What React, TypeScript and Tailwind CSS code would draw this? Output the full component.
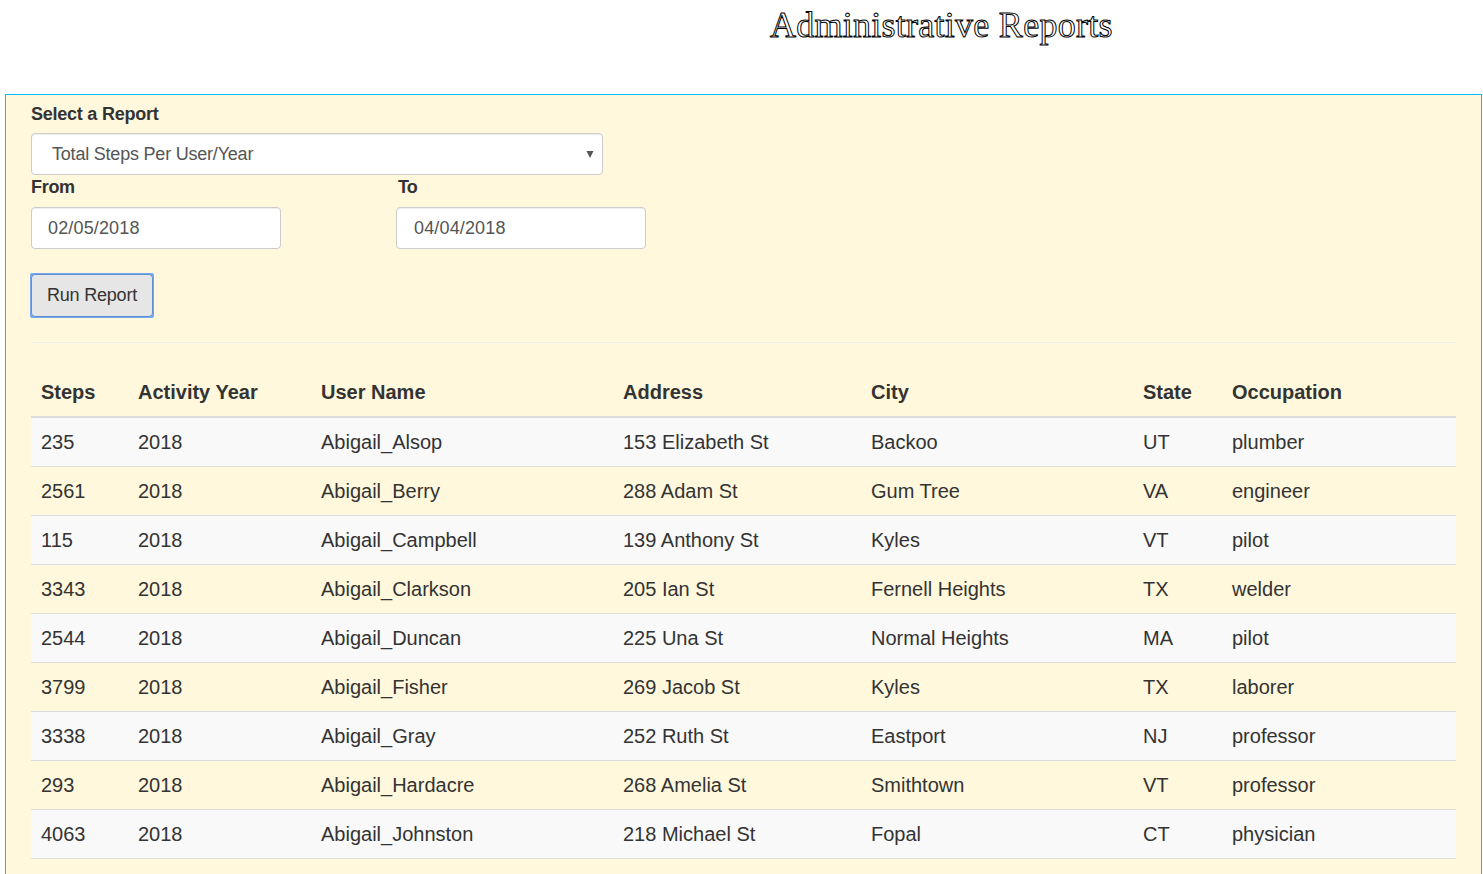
const rows = [
  ['235', '2018', 'Abigail_Alsop', '153 Elizabeth St', 'Backoo', 'UT', 'plumber'],
  ['2561', '2018', 'Abigail_Berry', '288 Adam St', 'Gum Tree', 'VA', 'engineer'],
  ['115', '2018', 'Abigail_Campbell', '139 Anthony St', 'Kyles', 'VT', 'pilot'],
  ['3343', '2018', 'Abigail_Clarkson', '205 Ian St', 'Fernell Heights', 'TX', 'welder'],
  ['2544', '2018', 'Abigail_Duncan', '225 Una St', 'Normal Heights', 'MA', 'pilot'],
  ['3799', '2018', 'Abigail_Fisher', '269 Jacob St', 'Kyles', 'TX', 'laborer'],
  ['3338', '2018', 'Abigail_Gray', '252 Ruth St', 'Eastport', 'NJ', 'professor'],
  ['293', '2018', 'Abigail_Hardacre', '268 Amelia St', 'Smithtown', 'VT', 'professor'],
  ['4063', '2018', 'Abigail_Johnston', '218 Michael St', 'Fopal', 'CT', 'physician'],
];

const columns = ['Steps', 'Activity Year', 'User Name', 'Address', 'City', 'State', 'Occupation'];

const inputClass =
  'block h-[42px] w-[250px] rounded-[4px] border border-[#ccc] bg-white text-[18px] tracking-[0.15px] text-[#555] shadow-[inset_0_1px_1px_rgba(0,0,0,0.075)] outline-none';

export default function App() {
  return (
    <div className="h-[874px] overflow-hidden bg-white font-['Liberation_Sans',Arial,sans-serif] text-[#333]">
      <header className="h-[94px] pl-[770px] pt-[4px]">
        <h1 className="whitespace-nowrap font-['Liberation_Serif','Times_New_Roman',serif] text-[36px] leading-[43px] tracking-[0.26px] text-white [-webkit-text-stroke:1px_#000]">
          Administrative Reports
        </h1>
      </header>
      <main className="ml-[5px] h-[900px] w-[1477px] border border-[#00bfff] bg-[#fff8dc] px-[25px]">
        <label className="block pt-[6px] text-[18px] font-bold leading-[26px] tracking-[-0.24px]">Select a Report</label>
        <div className="mt-[6px] flex h-[42px] w-[572px] items-center justify-between rounded-[4px] border border-[#ccc] bg-white pl-5 pr-[8px] text-[18px] tracking-[-0.21px] text-[#555] shadow-[inset_0_1px_1px_rgba(0,0,0,0.075)]">
          <span>Total Steps Per User/Year</span>
          <svg width="8" height="7" viewBox="0 0 8 7">
            <path d="M0.5 0h7L4 7z" fill="#555" />
          </svg>
        </div>
        <div className="flex">
          <div className="w-[365px]">
            <label className="mb-[7px] block text-[18px] font-bold leading-[25px] tracking-[-0.3px]">From</label>
            <input className={`${inputClass} px-4`} defaultValue="02/05/2018" />
          </div>
          <div>
            <label className="mb-[7px] block pl-[2px] text-[18px] font-bold leading-[25px] tracking-[-1px]">To</label>
            <input className={`${inputClass} px-[17px]`} defaultValue="04/04/2018" />
          </div>
        </div>
        <div className="mt-6 -ml-px h-[45px] w-[124px] rounded-[2px] bg-[#78a8f0] p-px">
          <button className="block h-full w-full rounded-[4px] border border-[#5f8fd0] bg-[#e6e6e6] text-[18px] tracking-[-0.2px] text-[#333]">
            Run Report
          </button>
        </div>
        <hr className="mt-6 border-t border-[#eee]" />
        <table className="mt-6 w-[1425px] table-fixed border-collapse text-[20px] leading-7">
          <colgroup>
            <col className="w-[97px]" />
            <col className="w-[183px]" />
            <col className="w-[302px]" />
            <col className="w-[248px]" />
            <col className="w-[272px]" />
            <col className="w-[89px]" />
            <col className="w-[234px]" />
          </colgroup>
          <thead>
            <tr className="h-[50px] border-b-2 border-[#ddd]">
              {columns.map((c) => (
                <th key={c} className="px-[10px] text-left font-bold">{c}</th>
              ))}
            </tr>
          </thead>
          <tbody>
            {rows.map((r) => (
              <tr key={r[2]} className="h-[49px] border-b border-[#ddd] odd:bg-[#f9f9f9]">
                {r.map((v, i) => (
                  <td key={i} className="px-[10px]">{v}</td>
                ))}
              </tr>
            ))}
          </tbody>
        </table>
      </main>
    </div>
  );
}
